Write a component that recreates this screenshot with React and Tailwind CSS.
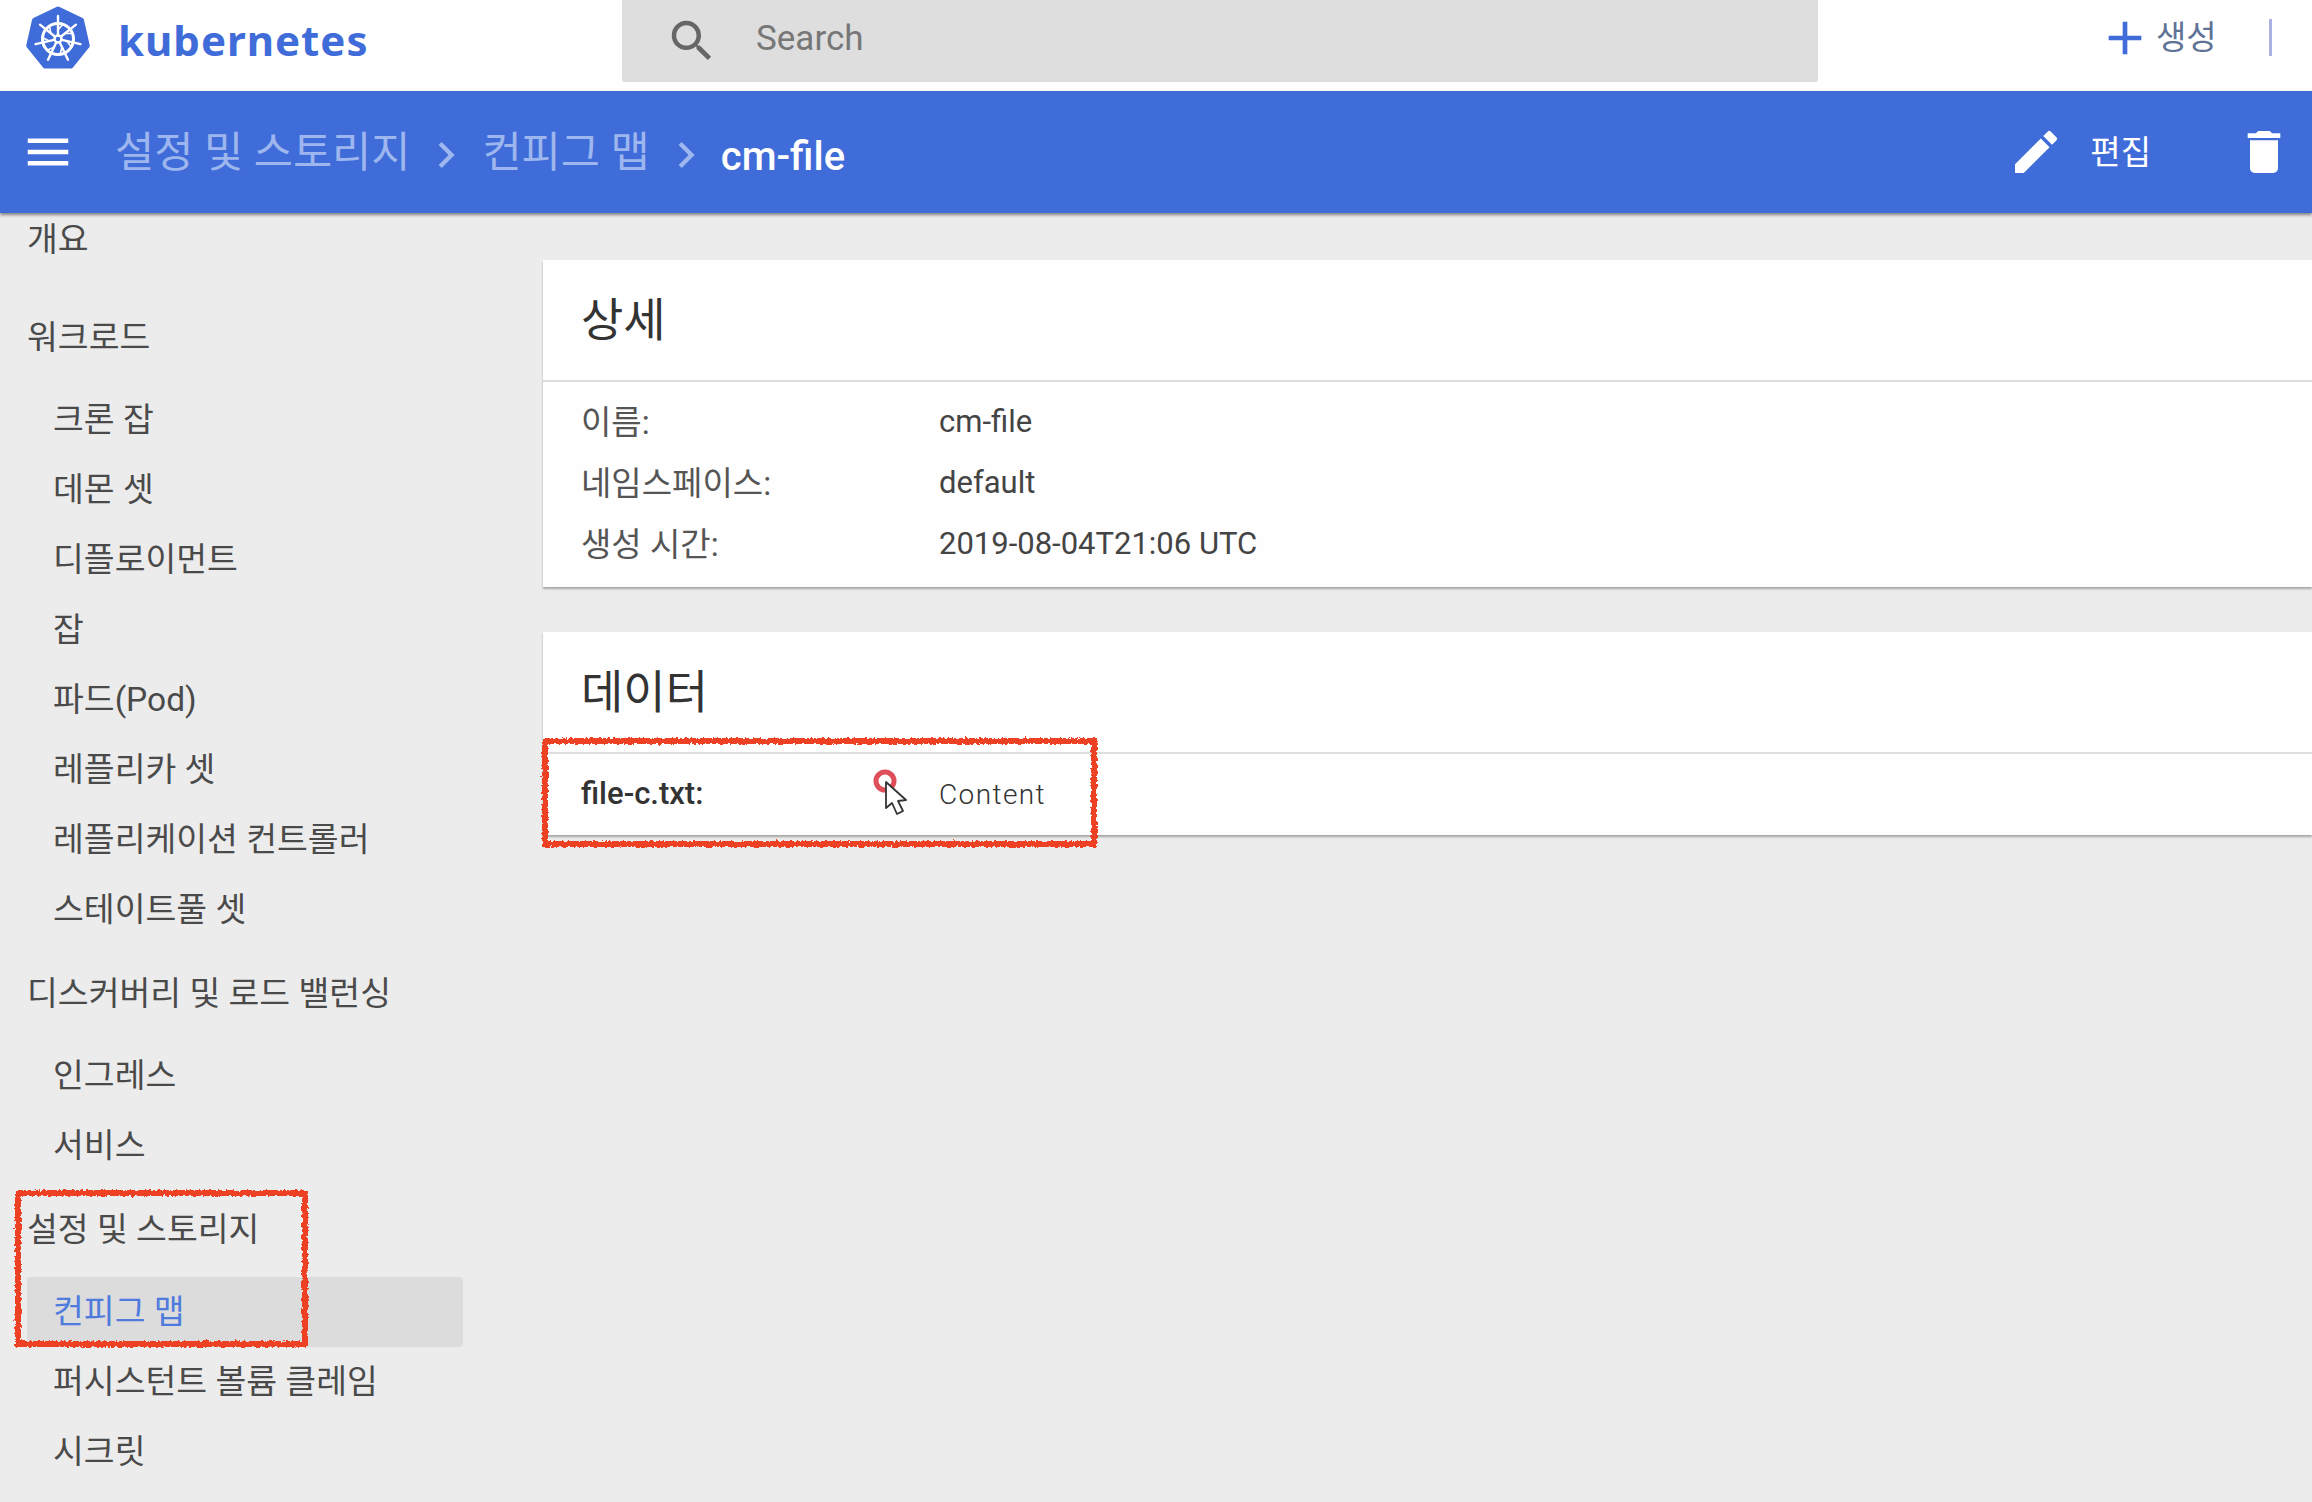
import { MdAdd, MdChevronRight, MdDelete, MdEdit, MdMenu, MdSearch } from 'react-icons/md'

const workloads = ['크론 잡', '데몬 셋', '디플로이먼트', '잡', '파드(Pod)', '레플리카 셋', '레플리케이션 컨트롤러', '스테이트풀 셋']
const discovery = ['인그레스', '서비스']
const config = ['컨피그 맵', '퍼시스턴트 볼륨 클레임', '시크릿']
const details = [
  ['이름:', 'cm-file'],
  ['네임스페이스:', 'default'],
  ['생성 시간:', '2019-08-04T21:06 UTC'],
]

function KubeLogo() {
  const spokes = [0, 1, 2, 3, 4, 5, 6]
  return (
    <svg width="66" height="66" viewBox="0 0 66 66" className="shrink-0">
      <path
        d="M33 3 L56.5 14.3 L62.3 39.7 L46 60 L20 60 L3.7 39.7 L9.5 14.3 Z"
        fill="#3f6cd8"
        stroke="#3f6cd8"
        strokeWidth="5"
        strokeLinejoin="round"
      />
      <g stroke="#fff" fill="none" strokeLinecap="round">
        <circle cx="33" cy="33" r="15.5" strokeWidth="3" />
        <circle cx="33" cy="33" r="3.5" strokeWidth="2.5" />
        {spokes.map((n) => (
          <line key={n} x1="33" y1="29" x2="33" y2="10" strokeWidth="2.4" transform={`rotate(${n * 51.43} 33 33)`} />
        ))}
        {spokes.map((n) => (
          <line key={n} x1="33" y1="24" x2="38" y2="18" strokeWidth="1.6" transform={`rotate(${n * 51.43} 33 33)`} />
        ))}
      </g>
    </svg>
  )
}

function RoughBox({ className }) {
  return (
    <svg className={`absolute pointer-events-none ${className}`} width="100%" height="100%" overflow="visible">
      <rect x="3" y="3" width="calc(100% - 6px)" height="calc(100% - 6px)" fill="none" stroke="#ee3f24" strokeWidth="6" filter="url(#rough)" />
    </svg>
  )
}

function SideHeading({ children, className = '' }) {
  return <div className={`flex h-[94px] items-center pl-[27px] ${className}`}>{children}</div>
}

function SideItem({ label, active }) {
  return (
    <div className={`ml-[27px] flex h-[70px] w-[436px] items-center rounded-[3px] pl-[26px] ${active ? 'bg-[#dcdcdc] text-[#4f7bdc]' : ''}`}>
      {label}
    </div>
  )
}

function Card({ title, className = '', children }) {
  return (
    <section className={`bg-[#fefefe] shadow-[0_2px_2px_rgba(0,0,0,0.3)] ${className}`}>
      <h2 className="flex h-[122px] items-center border-b-2 border-[#dedede] pl-[38px] text-[46px] font-normal text-[#333]">{title}</h2>
      {children}
    </section>
  )
}

export default function App() {
  return (
    <div className="relative flex h-[1502px] w-[2312px] flex-col overflow-hidden bg-[#ececec] font-[family-name:Roboto,'Noto_Sans_CJK_KR',sans-serif] text-[#444]">
      <svg width="0" height="0" className="absolute">
        <filter id="rough">
          <feTurbulence type="fractalNoise" baseFrequency="0.35" numOctaves="2" seed="4" />
          <feDisplacementMap in="SourceGraphic" scale="5" />
        </filter>
      </svg>

      <header className="flex h-[91px] shrink-0 items-start bg-white">
        <div className="flex h-[77px] w-[622px] shrink-0 items-center pl-[25px]">
          <KubeLogo />
          <span className="ml-[27px] mt-[2px] font-[family-name:'Noto_Sans',sans-serif] text-[42px] font-bold leading-none tracking-[1px] text-[#3f6cd8]">kubernetes</span>
        </div>
        <div className="flex h-[82px] w-[1196px] items-center rounded-b-[3px] bg-[#dedede]">
          <MdSearch className="ml-[43px] text-[#666]" size={54} />
          <span className="ml-[37px] pb-[3px] text-[35px] text-[#777]">Search</span>
        </div>
        <div className="flex h-[75px] flex-1 items-center">
          <MdAdd className="ml-[279px] text-[#3f6cd8]" size={56} />
          <span className="ml-[3px] text-[33px] text-[#5f7396]">생성</span>
          <div className="ml-[52px] h-[37px] w-[3px] bg-[#aab2e4]" />
        </div>
      </header>

      <div className="z-10 flex h-[122px] shrink-0 items-center bg-[#3f6cd8] shadow-[0_2px_3px_rgba(0,0,0,0.45)]">
        <MdMenu className="ml-[21px] text-white" size={54} />
        <span className="ml-[40px] mt-[1px] text-[42.6px] text-[#9db6ee]">설정 및 스토리지</span>
        <MdChevronRight className="ml-[10px] mt-[6px] text-[#9db6ee]" size={52} />
        <span className="ml-[10px] mt-[1px] text-[42.6px] text-[#9db6ee]">컨피그 맵</span>
        <MdChevronRight className="ml-[10px] mt-[6px] text-[#9db6ee]" size={52} />
        <span className="ml-[9px] mt-[9px] text-[40px] font-medium text-white">cm-file</span>
        <MdEdit className="ml-auto text-white" size={56} />
        <span className="ml-[26px] mt-[2px] text-[33px] text-white">편집</span>
        <MdDelete className="ml-[85px] mr-[20px] text-white" size={56} />
      </div>

      <div className="flex flex-1 overflow-hidden">
        <aside className="w-[543px] shrink-0 text-[33.5px] text-[#4a4a4a]">
          <div className="flex h-[54px] items-center pl-[27px]">개요</div>
          <SideHeading className="mt-[24px]">워크로드</SideHeading>
          {workloads.map((label) => <SideItem key={label} label={label} />)}
          <SideHeading className="mt-[2px]">디스커버리 및 로드 밸런싱</SideHeading>
          {discovery.map((label) => <SideItem key={label} label={label} />)}
          <SideHeading className="mt-[2px]">설정 및 스토리지</SideHeading>
          {config.map((label) => <SideItem key={label} label={label} active={label === '컨피그 맵'} />)}
        </aside>

        <main className="flex-1 pt-[47px]">
          <Card title="상세" className="h-[327px]">
            <div className="pt-[10px] text-[31px]">
              {details.map(([label, value]) => (
                <div key={label} className="flex h-[61px] items-center pl-[38px]">
                  <span className="w-[358px] text-[33px] text-[#555]">{label}</span>
                  <span className="text-[#444]">{value}</span>
                </div>
              ))}
            </div>
          </Card>
          <Card title="데이터" className="mt-[45px] h-[203px]">
            <div className="flex h-[81px] items-center pl-[38px] text-[31px]">
              <span className="w-[358px] font-medium text-[#333]">file-c.txt:</span>
              <span className="text-[28px] font-light tracking-[1.4px] text-[#333]">Content</span>
            </div>
          </Card>
        </main>
      </div>

      {/* red annotation boxes and the recorded cursor sit over the page */}
      <div className="absolute left-[542px] top-[738px] h-[109px] w-[555px]"><RoughBox className="inset-0" /></div>
      <div className="absolute left-[15px] top-[1190px] h-[157px] w-[293px]"><RoughBox className="inset-0" /></div>
      <svg className="absolute left-[870px] top-[765px]" width="50" height="60" viewBox="0 0 50 60">
        <circle cx="15" cy="16" r="9" fill="none" stroke="#d8303c" strokeWidth="5" opacity="0.85" />
        <path d="M16 17 L16 43 L22 38 L27 49 L33 46 L28 36 L36 35 Z" fill="#fff" stroke="#333" strokeWidth="1.8" strokeLinejoin="round" />
      </svg>
    </div>
  )
}
